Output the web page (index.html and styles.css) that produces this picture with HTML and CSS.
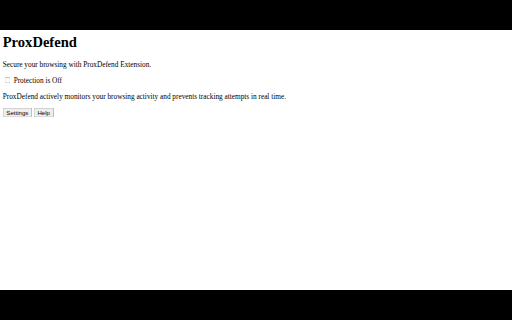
FILE: index.html
```html
<!DOCTYPE html>
<html lang="en">
<head>
    <meta charset="UTF-8">
    <meta name="viewport" content="width=device-width, initial-scale=1.0">
    <title>ProxDefend</title>
    <link rel="stylesheet" href="styles.css">
</head>
<body>
    <div class="viewport">
        <div class="page">
            <h1>ProxDefend</h1>
            <p>Secure your browsing with ProxDefend Extension.</p>
            <div class="toggle">
                <input type="checkbox" id="protection">
                <label for="protection">Protection is Off</label>
            </div>
            <p>ProxDefend actively monitors your browsing activity and prevents tracking attempts in real time.</p>
            <div class="actions">
                <button>Settings</button>
                <button>Help</button>
            </div>
        </div>
    </div>
</body>
</html>
```

FILE: styles.css
```css
html, body {
    margin: 0;
    background-color: #000;
}
body {
    display: flex;
    flex-direction: column;
    justify-content: center;
    height: 320px;
    overflow: hidden;
}
.viewport {
    width: 512px;
    height: 260px;
    background-color: #fff;
    overflow: hidden;
}
/* page is drawn at full size, then shrunk like the screenshot */
.page {
    width: 1125px;
    height: 571px;
    padding: 8px 6px;
    box-sizing: border-box;
    font-family: "Liberation Serif", "Times New Roman", serif;
    font-size: 16px;
    color: #000;
    transform: scale(0.455);
    transform-origin: 0 0;
}
h1 {
    font-size: 32px;
    margin: 0 0 22px;
}
p {
    margin: 16px 0;
}
```
